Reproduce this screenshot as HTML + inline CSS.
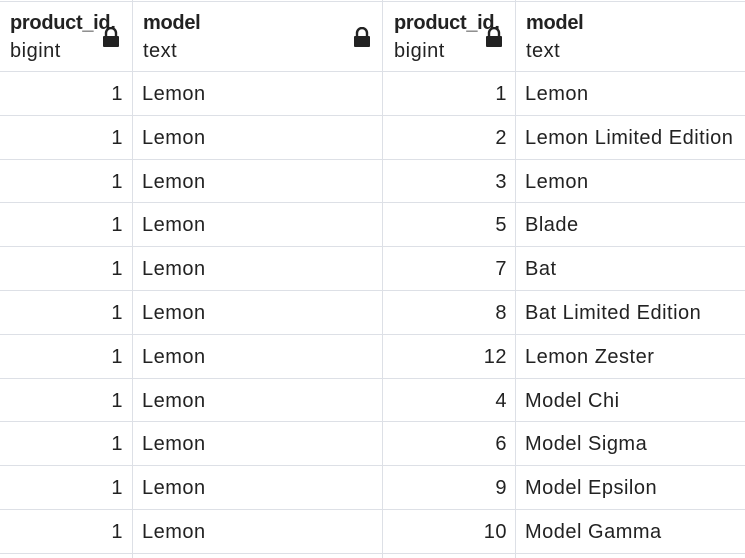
<html><head><style>
body{margin:0;width:745px;height:558px;overflow:hidden;background:#fff;font-family:"Liberation Sans",sans-serif;color:#222}
.l{position:absolute;background:#dde0e6}
.t{position:absolute;font-size:20px;white-space:nowrap;letter-spacing:0.5px}
.h{font-weight:bold;font-size:20px;letter-spacing:-0.3px}
</style></head><body>
<div class="l" style="left:0;top:1px;width:745px;height:1px"></div>
<div class="l" style="left:0;top:71px;width:745px;height:1px"></div>
<div class="l" style="left:132px;top:0;width:1px;height:558px"></div>
<div class="l" style="left:382px;top:0;width:1px;height:558px"></div>
<div class="l" style="left:515px;top:0;width:1px;height:558px"></div>
<div id="rows"></div>
<div class="t h" style="left:10px;top:12px">product_id.</div>
<div class="t" style="left:10px;top:40px">bigint</div>
<div class="t h" style="left:143px;top:12px">model</div>
<div class="t" style="left:143px;top:40px">text</div>
<div class="t h" style="left:394px;top:12px">product_id.</div>
<div class="t" style="left:394px;top:40px">bigint</div>
<div class="t h" style="left:526px;top:12px">model</div>
<div class="t" style="left:526px;top:40px">text</div>
<svg style="position:absolute;left:102px;top:27px" width="18" height="21" viewBox="0 0 18 21"><path d="M4 10V6a5 5 0 0 1 10 0v4" fill="none" stroke="#222" stroke-width="2.4"/><rect x="1" y="9" width="16" height="11" rx="1" fill="#222"/></svg>
<svg style="position:absolute;left:353px;top:27px" width="18" height="21" viewBox="0 0 18 21"><path d="M4 10V6a5 5 0 0 1 10 0v4" fill="none" stroke="#222" stroke-width="2.4"/><rect x="1" y="9" width="16" height="11" rx="1" fill="#222"/></svg>
<svg style="position:absolute;left:485px;top:27px" width="18" height="21" viewBox="0 0 18 21"><path d="M4 10V6a5 5 0 0 1 10 0v4" fill="none" stroke="#222" stroke-width="2.4"/><rect x="1" y="9" width="16" height="11" rx="1" fill="#222"/></svg>
<script>
var ids=[1,2,3,5,7,8,12,4,6,9,10],m=["Lemon","Lemon Limited Edition","Lemon","Blade","Bat","Bat Limited Edition","Lemon Zester","Model Chi","Model Sigma","Model Epsilon","Model Gamma"],h="";
for(var i=0;i<11;i++){var y=71+i*43.8;
h+='<div class="l" style="left:0;top:'+(y+43.8).toFixed(0)+'px;width:745px;height:1px"></div>';
var ty=(y+12).toFixed(0);
h+='<div class="t" style="right:622px;top:'+ty+'px">1</div>';
h+='<div class="t" style="left:142px;top:'+ty+'px">Lemon</div>';
h+='<div class="t" style="right:238px;top:'+ty+'px">'+ids[i]+'</div>';
h+='<div class="t" style="left:525px;top:'+ty+'px">'+m[i]+'</div>';}
document.getElementById('rows').innerHTML=h;
</script>
</body></html>
